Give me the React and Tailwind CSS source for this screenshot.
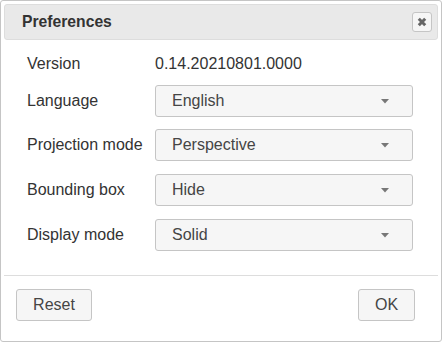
import React from "react";

function Select({ value }) {
  return (
    <div className="flex h-[32px] w-[258px] items-center justify-between rounded-[3px] border border-[#c5c5c5] bg-[#f6f6f6] pl-[16px] pr-[23px] text-[#454545]">
      <span>{value}</span>
      <svg width="8" height="5" viewBox="0 0 8 5">
        <path d="M0 0 L8 0 L4 4.5 Z" fill="#777" />
      </svg>
    </div>
  );
}

export default function App() {
  const rows = [
    ["Language", "English", "mt-[10px]"],
    ["Projection mode", "Perspective", "mt-[12px]"],
    ["Bounding box", "Hide", "mt-[13px]"],
    ["Display mode", "Solid", "mt-[13px]"],
  ];
  return (
    <div
      className="flex h-[342px] w-[442px] flex-col rounded-[3px] border border-[#c5c5c5] bg-white p-[3px] text-[16px] text-[#333]"
      style={{ fontFamily: '"Liberation Sans", Arial, sans-serif' }}
    >
      <div className="flex h-[36px] items-center justify-between rounded-[3px] border border-[#dddddd] bg-[#e9e9e9] pl-[17px] pr-[5px]">
        <span className="text-[15.7px] font-bold text-[#333]">Preferences</span>
        <div className="flex h-[20px] w-[20px] items-center justify-center rounded-[3px] border border-[#c5c5c5] bg-[#f6f6f6]">
          <svg width="10" height="10" viewBox="0 0 10 10">
            <path d="M1.8 1.8 L8.2 8.2 M8.2 1.8 L1.8 8.2" stroke="#666" strokeWidth="3" />
          </svg>
        </div>
      </div>
      <div className="flex flex-col pl-[23px] pt-[13px]">
        <div className="flex h-[22px] items-center">
          <span className="w-[128px]">Version</span>
          <span>0.14.20210801.0000</span>
        </div>
        {rows.map(([label, value, m]) => (
          <div key={label} className={`flex items-center ${m}`}>
            <span className="w-[128px]">{label}</span>
            <Select value={value} />
          </div>
        ))}
      </div>
      <div className="mt-[24px] border-t border-[#dddddd]" />
      <div className="flex justify-between pl-[12px] pr-[23px] pt-[13px]">
        <button className="h-[32px] w-[76px] rounded-[3px] border border-[#c5c5c5] bg-[#f6f6f6] text-[#454545]">
          Reset
        </button>
        <button className="h-[32px] w-[57px] rounded-[3px] border border-[#c5c5c5] bg-[#f6f6f6] text-[#454545]">
          OK
        </button>
      </div>
    </div>
  );
}
